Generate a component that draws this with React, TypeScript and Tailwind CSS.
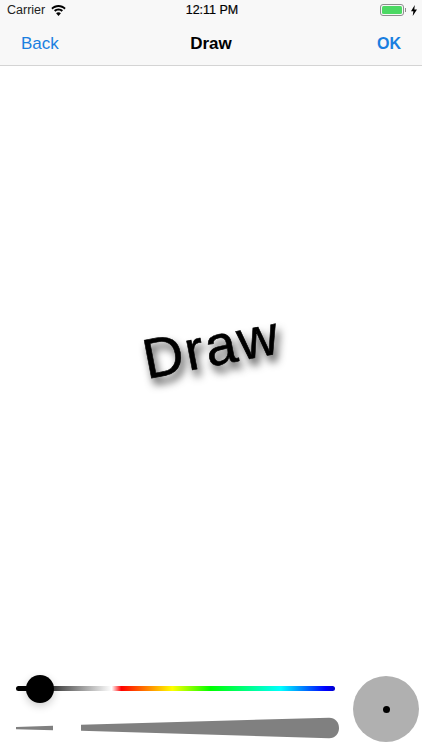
import React from 'react';

function WifiIcon() {
  return (
    <svg width="15" height="11" viewBox="0 0 15 11" fill="#000">
      <path d="M7.500 0C4.700 0 2.200 1.100 0.300 2.900L1.700 4.400C3.200 3 5.300 2.100 7.500 2.100S11.800 3 13.300 4.400L14.700 2.900C12.800 1.100 10.300 0 7.500 0Z" />
      <path d="M7.500 3.500C5.800 3.500 4.200 4.200 3 5.300L4.400 6.800C5.200 6 6.300 5.500 7.500 5.500S9.800 6 10.600 6.800L12 5.300C10.800 4.200 9.200 3.500 7.500 3.500Z" />
      <path d="M7.500 11L9.900 8.300C9.300 7.700 8.400 7.300 7.500 7.300S5.700 7.700 5.100 8.300Z" />
    </svg>
  );
}

function Battery() {
  return (
    <div className="flex items-center gap-[3px]">
      <div className="flex items-center">
        <div className="h-[12px] w-[24px] rounded-[3px] border border-[#8e8e8e] p-[1px]">
          <div className="h-full w-full rounded-[1.5px] bg-[#4cd964]" />
        </div>
        <div className="ml-[1px] h-[4px] w-[1px] bg-[#8e8e8e]" />
      </div>
      <svg width="6" height="11" viewBox="0 0 6 11" fill="#000" className="ml-[2px]">
        <path d="M3.800 0L0 6.300h2.400L1.700 11 6 4.500H3.300z" />
      </svg>
    </div>
  );
}

function WidthWedge() {
  return (
    <svg width="324" height="22" viewBox="0 0 324 22" className="block">
      <path d="M0 10L37 8.800V13.200L0 12.200Z" fill="#808080" />
      <path d="M65 7.800L313 0.700C319 0.600 323 5 323 11C323 17 319 21.400 313 21.300L65 13.800Z" fill="#808080" />
    </svg>
  );
}

export default function App() {
  return (
    <div className="flex h-[750px] w-[422px] flex-col overflow-hidden bg-white font-['Liberation_Sans',sans-serif] text-black">
      <div className="bg-[#f8f8f8]">
        <div className="grid h-[20px] grid-cols-3 items-center pl-[7px] pr-[5px] text-[12.500px]">
          <div className="flex items-center gap-[6px] text-[#222]">
            <span>Carrier</span>
            <WifiIcon />
          </div>
          <div className="text-center [-webkit-text-stroke:0.2px_black]">12:11 PM</div>
          <div className="flex justify-end">
            <Battery />
          </div>
        </div>
        <div className="grid h-[46px] grid-cols-3 items-center border-b border-[#d4d4d4] px-[21px] pt-[2px]">
          <span className="text-[17px] text-[#1a7fe0]">Back</span>
          <span className="text-center text-[17px] font-bold">Draw</span>
          <span className="text-right text-[16px] font-bold text-[#1a7fe0]">OK</span>
        </div>
      </div>

      <div className="flex flex-1 items-center justify-center pb-[48px]">
        <div className="-rotate-[11deg] text-[56px] leading-none tracking-[2px] [-webkit-text-stroke:0.6px_black] [text-shadow:2px_7px_8px_rgba(0,0,0,0.8)]">
          Draw
        </div>
      </div>

      <div className="flex h-[74px] items-start justify-between pl-[16px] pr-[3px]">
        <div className="flex w-[324px] flex-col">
          <div className="relative mt-[10px] h-[5px] w-[319px] rounded-full bg-[linear-gradient(to_right,#000_0%,#000_6%,#fff_30%,#f00_33%,#ff0_49%,#0f0_61%,#0ff_83%,#00f_97%,#00c_100%)]">
            <div className="absolute left-[9.500px] top-[-11.500px] h-[28px] w-[28px] rounded-full bg-black shadow-[0_3px_8px_rgba(0,0,0,0.2)]" />
          </div>
          <div className="mt-[26px]">
            <WidthWedge />
          </div>
        </div>
        <div className="flex h-[66px] w-[66px] items-center justify-center rounded-full bg-[#b0b0b0]">
          <div className="h-[7px] w-[7px] rounded-full bg-black" />
        </div>
      </div>
    </div>
  );
}
